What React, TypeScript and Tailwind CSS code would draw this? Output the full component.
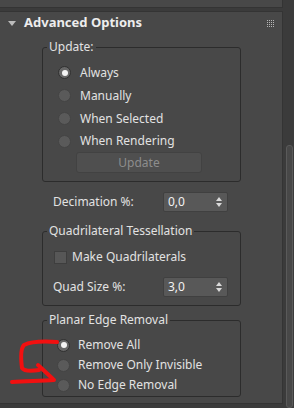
import React from "react";

const font = { fontFamily: '"Noto Sans", "Open Sans", Arial, sans-serif' };

function Radio({ checked }: { checked?: boolean }) {
  return checked ? (
    <span className="flex h-[13px] w-[13px] shrink-0 items-center justify-center rounded-full border border-[#303030] bg-[#676767]">
      <span className="h-[6px] w-[6px] rounded-full bg-[#f4f4f4]" />
    </span>
  ) : (
    <span className="h-[13px] w-[13px] shrink-0 rounded-full border border-[#444444] bg-[#5a5a5a]" />
  );
}

function RadioRow({
  label,
  checked,
  className,
}: {
  label: string;
  checked?: boolean;
  className: string;
}) {
  return (
    <div className={"flex items-center " + className}>
      <Radio checked={checked} />
      <span>{label}</span>
    </div>
  );
}

function Spinner({ value }: { value: string }) {
  return (
    <div className="flex h-[20px] w-[65px] items-center justify-between rounded-[2px] border border-[#404040] bg-[#585858] pl-[4px] pr-[5px] text-[#f2f2f2]">
      <span>{value}</span>
      <svg width="6" height="10" viewBox="0 0 6 10">
        <path d="M3 0 L6 4 L0 4 Z" fill="#dadada" />
        <path d="M0 6 L6 6 L3 10 Z" fill="#dadada" />
      </svg>
    </div>
  );
}

function Group({
  title,
  className,
  children,
}: {
  title: string;
  className: string;
  children: React.ReactNode;
}) {
  return (
    <fieldset
      className={
        "ml-[42px] w-[199px] rounded-[3px] border border-[#2c2c2c] " + className
      }
    >
      <legend className="ml-[4px] px-[2px] leading-[16px]">{title}</legend>
      {children}
    </fieldset>
  );
}

function Grip() {
  const dots = [];
  for (let r = 0; r < 4; r++)
    for (let c = 0; c < 4; c++)
      dots.push(<rect key={r * 4 + c} x={c * 2} y={r * 2} width="1" height="1" fill="#b5b5b5" />);
  return (
    <svg width="7" height="7" viewBox="0 0 7 7">
      {dots}
    </svg>
  );
}

export default function App() {
  return (
    <div
      className="relative flex h-[408px] w-[294px] overflow-hidden bg-[#3b3b3b] text-[12px] text-[#e2e2e2]"
      style={font}
    >
      <div className="flex w-[283px] flex-col">
        {/* end of previous rollout */}
        <div className="h-[8px] border-b border-r border-[#343434] bg-[#484848]" />
        <div className="h-[3px]" />
        {/* Advanced Options rollout */}
        <div className="h-[393px] border border-l-0 border-[#343434] bg-[#484848]">
          <div className="flex h-[22px] items-center">
            <svg className="ml-[8px]" width="8" height="5" viewBox="0 0 8 5">
              <path d="M0 0 L8 0 L4 5 Z" fill="#bcbcbc" />
            </svg>
            <span className="ml-[8px] text-[13px] font-bold text-[#ededed]">
              Advanced Options
            </span>
            <span className="ml-auto mr-[8px] flex">
              <Grip />
            </span>
          </div>

          <Group title="Update:" className="mt-[5px] pb-[8px] pt-[6px]">
            <RadioRow className="h-[23px] gap-[9px] pl-[15px]" label="Always" checked />
            <RadioRow className="h-[23px] gap-[9px] pl-[15px]" label="Manually" />
            <RadioRow className="h-[23px] gap-[9px] pl-[15px]" label="When Selected" />
            <RadioRow className="h-[22px] gap-[9px] pl-[15px]" label="When Rendering" />
            <button className="ml-[33px] flex h-[21px] w-[126px] items-center justify-center rounded-[3px] border border-[#424242] bg-[#4f4f4f] text-[#8d8d8d]">
              Update
            </button>
          </Group>

          <div className="ml-[53px] mt-[10px] flex h-[20px] items-center">
            <span className="w-[110px]">Decimation %:</span>
            <Spinner value="0,0" />
          </div>

          <Group title="Quadrilateral Tessellation" className="mt-[11px] pb-[8px] pt-[7px]">
            <div className="flex h-[22px] items-center gap-[5px] pl-[11px]">
              <span className="h-[13px] w-[13px] border border-[#3e3e3e] bg-[#575757]" />
              <span>Make Quadrilaterals</span>
            </div>
            <div className="mt-[9px] flex h-[20px] items-center pl-[10px]">
              <span className="w-[110px]">Quad Size %:</span>
              <Spinner value="3,0" />
            </div>
          </Group>

          <Group title="Planar Edge Removal" className="mt-[6px] pb-[1px] pt-[7px]">
            <RadioRow className="h-[20px] gap-[8px] pl-[14px]" label="Remove All" checked />
            <RadioRow className="h-[20px] gap-[8px] pl-[14px]" label="Remove Only Invisible" />
            <RadioRow className="h-[20px] gap-[8px] pl-[14px]" label="No Edge Removal" />
          </Group>
        </div>
      </div>

      {/* scrollbar */}
      <div className="flex w-[11px] flex-col pl-[3px] pt-[145px]">
        <div className="h-[280px] w-[7px] rounded-[3px] border border-[#5a5a5a] bg-[#484848]" />
      </div>

      {/* red hand-drawn annotation */}
      <svg
        className="pointer-events-none absolute left-0 top-0"
        width="294"
        height="408"
        viewBox="0 0 294 408"
      >
        <g
          fill="none"
          stroke="#f21010"
          strokeWidth="4"
          strokeLinecap="round"
          strokeLinejoin="round"
        >
          <path d="M57 342 C44 341 30 342 24 345 C20 349 21 360 22 368 C25 372 33 371 39 370" />
          <path d="M38 365 L53 379" />
          <path d="M12 382 C28 381 42 381 54 380" />
        </g>
      </svg>
    </div>
  );
}
